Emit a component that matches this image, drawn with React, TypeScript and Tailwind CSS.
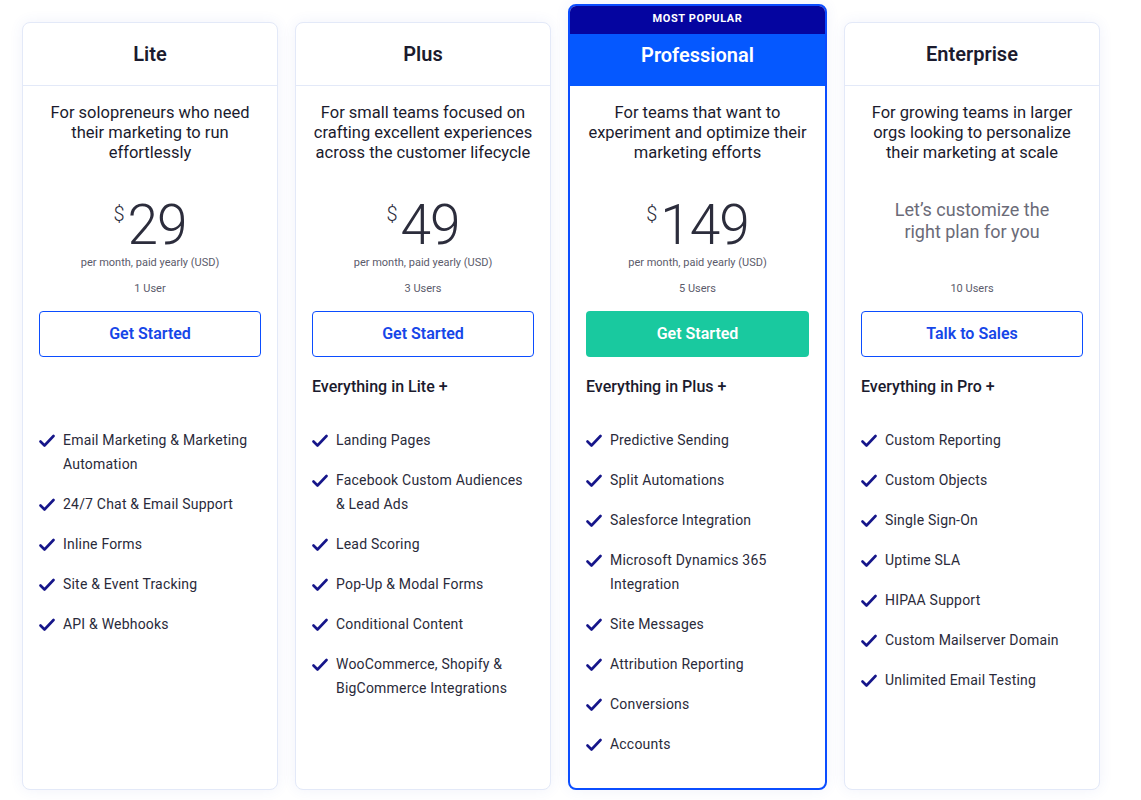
import React from 'react'

type Plan = {
  name: string
  desc: string[]
  price?: string
  users: string
  cta: string
  everything?: string
  features: string[][]
  popular?: boolean
}

const plans: Plan[] = [
  {
    name: 'Lite',
    desc: ['For solopreneurs who need', 'their marketing to run', 'effortlessly'],
    price: '29',
    users: '1 User',
    cta: 'Get Started',
    features: [
      ['Email Marketing & Marketing', 'Automation'],
      ['24/7 Chat & Email Support'],
      ['Inline Forms'],
      ['Site & Event Tracking'],
      ['API & Webhooks'],
    ],
  },
  {
    name: 'Plus',
    desc: ['For small teams focused on', 'crafting excellent experiences', 'across the customer lifecycle'],
    price: '49',
    users: '3 Users',
    cta: 'Get Started',
    everything: 'Everything in Lite +',
    features: [
      ['Landing Pages'],
      ['Facebook Custom Audiences', '& Lead Ads'],
      ['Lead Scoring'],
      ['Pop-Up & Modal Forms'],
      ['Conditional Content'],
      ['WooCommerce, Shopify &', 'BigCommerce Integrations'],
    ],
  },
  {
    name: 'Professional',
    desc: ['For teams that want to', 'experiment and optimize their', 'marketing efforts'],
    price: '149',
    users: '5 Users',
    cta: 'Get Started',
    everything: 'Everything in Plus +',
    popular: true,
    features: [
      ['Predictive Sending'],
      ['Split Automations'],
      ['Salesforce Integration'],
      ['Microsoft Dynamics 365', 'Integration'],
      ['Site Messages'],
      ['Attribution Reporting'],
      ['Conversions'],
      ['Accounts'],
    ],
  },
  {
    name: 'Enterprise',
    desc: ['For growing teams in larger', 'orgs looking to personalize', 'their marketing at scale'],
    users: '10 Users',
    cta: 'Talk to Sales',
    everything: 'Everything in Pro +',
    features: [
      ['Custom Reporting'],
      ['Custom Objects'],
      ['Single Sign-On'],
      ['Uptime SLA'],
      ['HIPAA Support'],
      ['Custom Mailserver Domain'],
      ['Unlimited Email Testing'],
    ],
  },
]

function Check() {
  return (
    <svg width="16" height="16" viewBox="0 0 16 16" className="shrink-0 mt-[5px]">
      <path d="M1.5 8.5 L5.5 12.5 L14.5 3" fill="none" stroke="#16168a" strokeWidth="2.6" strokeLinecap="round" strokeLinejoin="round" />
    </svg>
  )
}

function Card({ plan }: { plan: Plan }) {
  const pop = plan.popular
  return (
    <div
      className={
        pop
          ? 'w-[259px] h-[786px] flex flex-col rounded-[8px] border-2 border-[#0b4dff] bg-white overflow-hidden shadow-[0_0_14px_rgba(60,90,200,0.08)]'
          : 'w-[256px] h-[768px] mt-[18px] flex flex-col rounded-[8px] border border-[#e3e9f8] bg-white shadow-[0_0_14px_rgba(60,90,200,0.08)]'
      }
    >
      {pop && (
        <div className="h-[29px] -mt-[1px] bg-[#0505a0] text-white text-[11px] font-bold tracking-[0.6px] flex items-center justify-center">
          MOST POPULAR
        </div>
      )}
      <div
        className={
          pop
            ? 'h-[52px] bg-[#0558ff] text-white flex justify-center pt-[7px] text-[20px] leading-[28px] font-semibold'
            : 'h-[63px] border-b border-[#e3e9f8] text-[#1b1b2e] flex items-center justify-center text-[20px] font-semibold'
        }
      >
        {plan.name}
      </div>
      <div className="px-[16px] pt-[17px] flex flex-col">
        <div className="text-center text-[16.5px] leading-[20px] text-[#1b1b2e] whitespace-nowrap">
          {plan.desc.map((l) => (
            <div key={l}>{l}</div>
          ))}
        </div>
        <div className="h-[108px] flex flex-col items-center">
          {plan.price ? (
            <>
              <div className="mt-[35px] flex items-start text-[#2c2d3c]">
                <span className="text-[20px] leading-[20px] font-light mt-[6px] mr-[3px]">$</span>
                <span className="text-[55px] leading-[54px] font-light tracking-[-1px]">{plan.price}</span>
              </div>
              <div className="mt-[3px] text-[11px] leading-[16px] text-[#5b5b6b]">per month, paid yearly (USD)</div>
            </>
          ) : (
            <div className="mt-[36px] text-center text-[18px] leading-[22px] text-[#6b6b78]">
              <div>Let’s customize the</div>
              <div>right plan for you</div>
            </div>
          )}
        </div>
        <div className="mt-[10px] text-center text-[11px] leading-[16px] text-[#5b5b6b]">{plan.users}</div>
        <button
          className={
            pop
              ? 'mt-[14px] h-[46px] rounded-[4px] bg-[#19c99f] text-white text-[16px] font-semibold'
              : 'mt-[14px] h-[46px] rounded-[4px] border border-[#0b4dff] text-[#1646e8] text-[16px] font-semibold bg-white'
          }
        >
          {plan.cta}
        </button>
        <div className="mt-[18px] h-[24px] text-[16px] leading-[24px] font-medium text-[#1b1b2e]">{plan.everything}</div>
        <div className="mt-[29px] flex flex-col gap-[16px]">
          {plan.features.map((f) => (
            <div key={f[0]} className="flex gap-[8px]">
              <Check />
              <div className="text-[14px] leading-[24px] text-[#2a2a3a] tracking-[0.2px] whitespace-nowrap">
                {f.map((l) => (
                  <div key={l}>{l}</div>
                ))}
              </div>
            </div>
          ))}
        </div>
      </div>
    </div>
  )
}

export default function App() {
  return (
    <div className="w-[1141px] h-[800px] bg-white font-['Roboto',sans-serif] overflow-hidden">
      <div className="flex gap-[17px] pl-[22px] pt-[4px]">
        {plans.map((p) => (
          <Card key={p.name} plan={p} />
        ))}
      </div>
    </div>
  )
}
